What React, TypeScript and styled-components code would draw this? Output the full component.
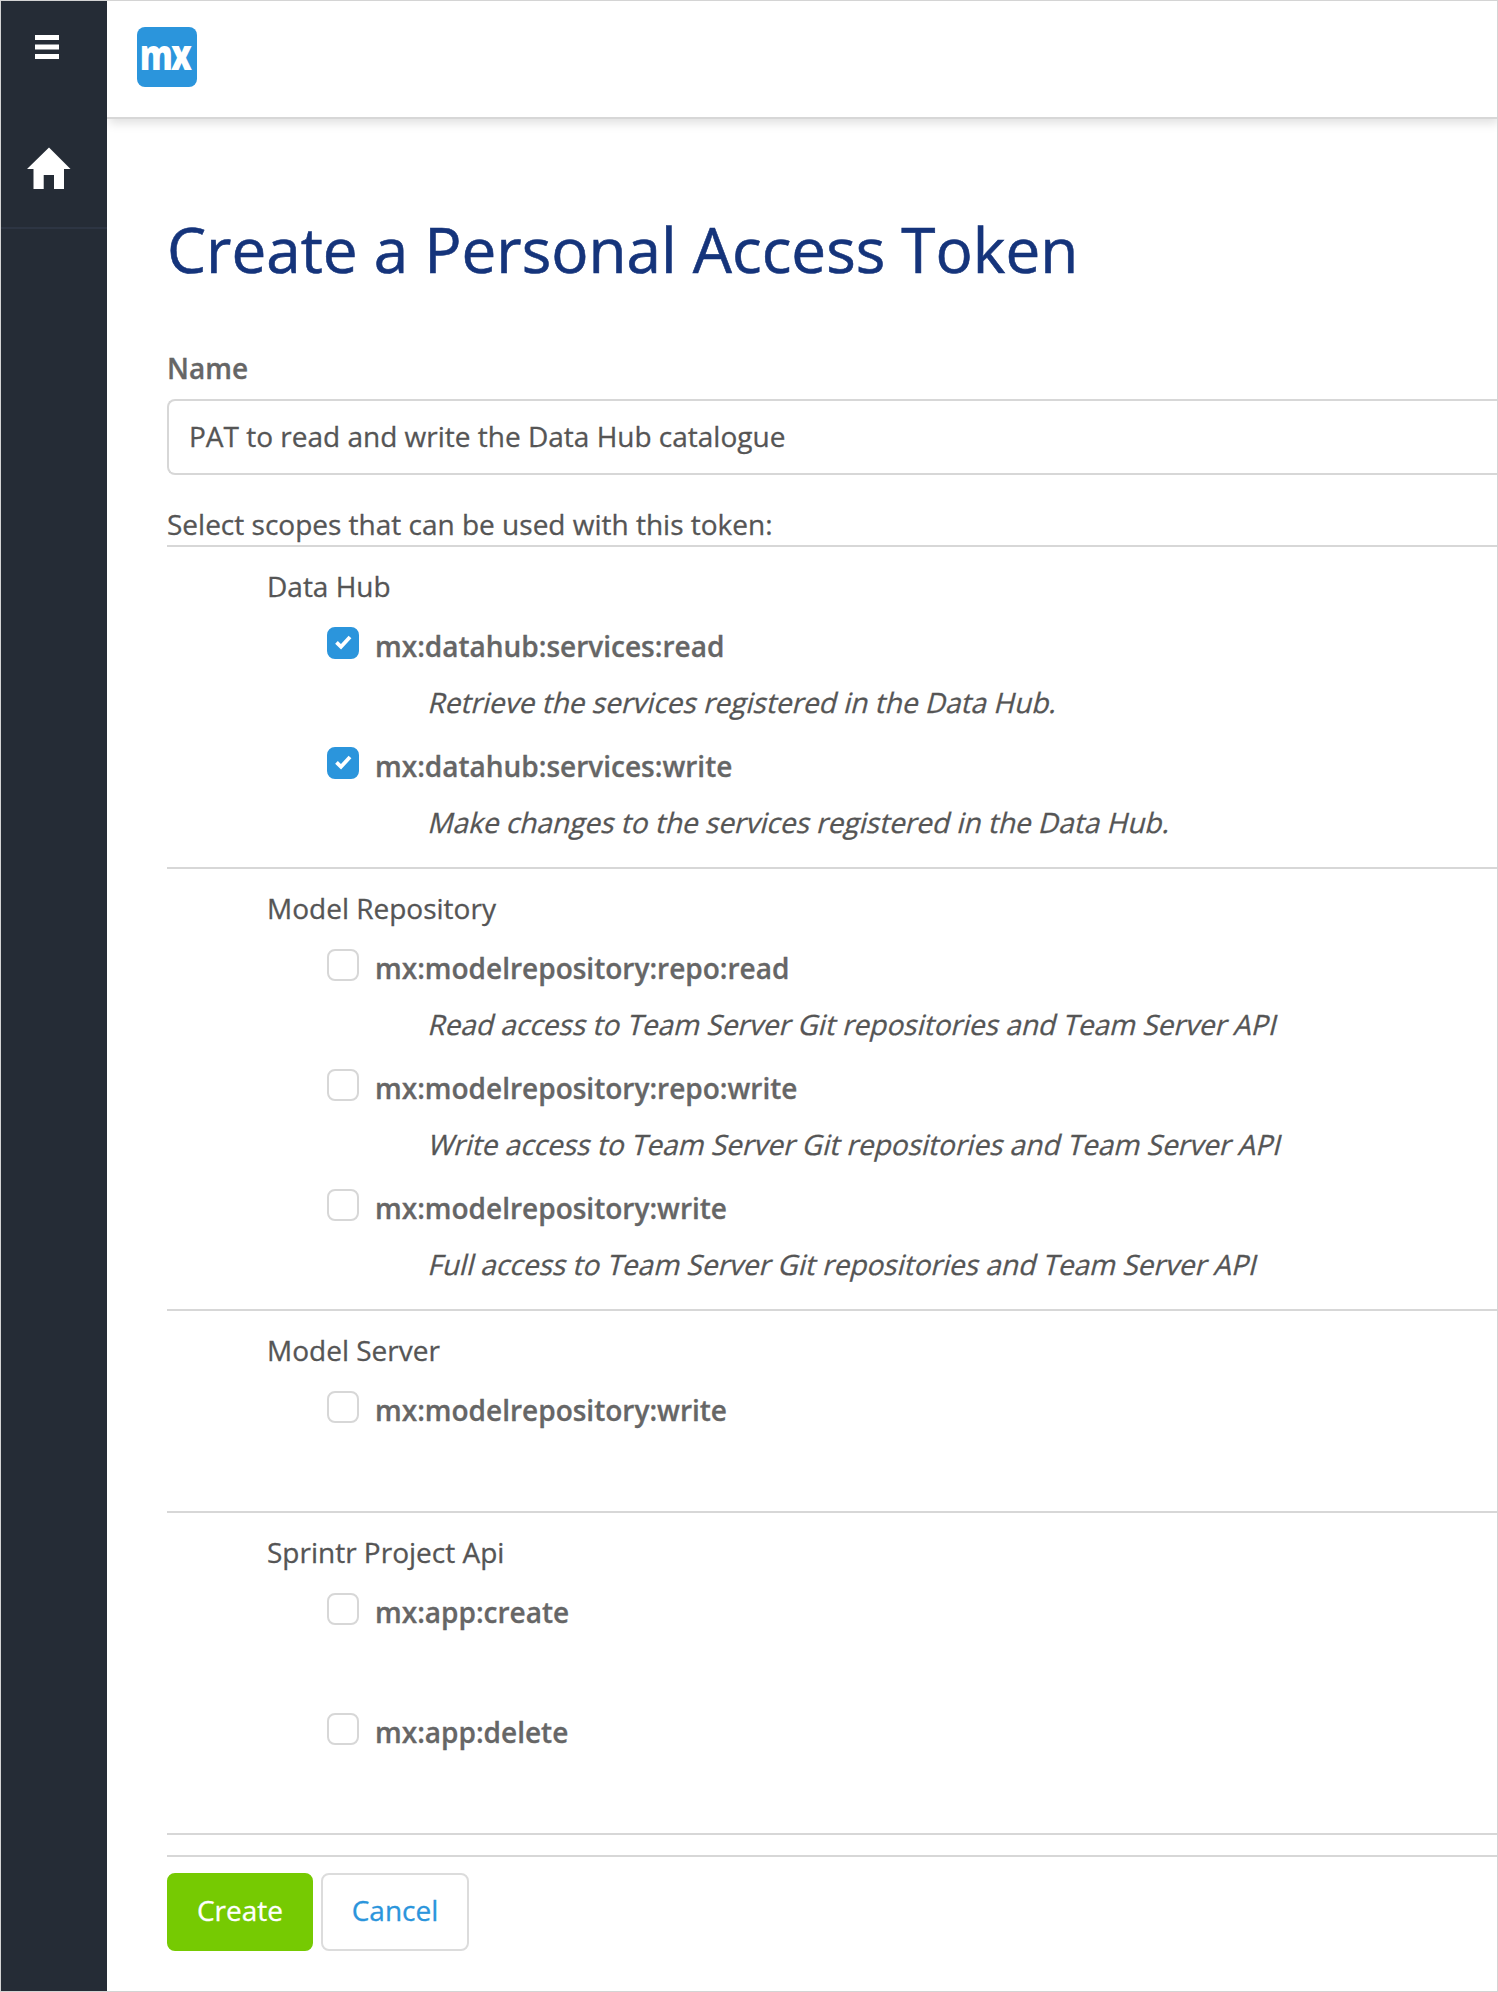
import React from "react";
import styled, { createGlobalStyle } from "styled-components";

const GlobalStyle = createGlobalStyle`
  *, *::before, *::after { box-sizing: border-box; }
  html, body { margin: 0; padding: 0; background: #fff; }
  body { overflow: hidden; }
`;

const Frame = styled.div`
  display: flex;
  width: 1498px;
  height: 1992px;
  overflow: hidden;
  border: 1px solid #d4d4d4;
  background: #fff;
  color: #555;
  font-family: "Open Sans", "Noto Sans", sans-serif;
  font-size: 28px;
  line-height: 40px;
  -webkit-text-stroke-width: 0.3px;
`;

const Sidebar = styled.nav`
  flex: none;
  width: 106px;
  background: #252c36;
`;

const MenuButton = styled.div`
  height: 108px;
  padding: 34px 0 0 34px;
  svg { display: block; }
`;

const HomeLink = styled.div`
  height: 120px;
  padding: 39px 0 0 26px;
  border-bottom: 2px solid #2d3543;
  svg { display: block; overflow: visible; }
`;

const Main = styled.div`
  flex: 1;
  min-width: 0;
  display: flex;
  flex-direction: column;
`;

const Header = styled.header`
  flex: none;
  height: 118px;
  padding: 26px 0 0 30px;
  border-bottom: 2px solid #d7d7d7;
  box-shadow: 2px 4px 10px rgba(0, 0, 0, 0.13);
  clip-path: inset(0 0 -30px 0);
  svg { display: block; overflow: visible; }
`;

const Content = styled.main`
  flex: 1;
  display: flex;
  flex-direction: column;
  padding: 87px 0 0 60px;
`;

const Title = styled.h1`
  margin: 0;
  font-size: 62px;
  font-weight: 400;
  line-height: 86px;
  color: #15347b;
  white-space: nowrap;
  -webkit-text-stroke-width: 0.6px;
`;

const FieldLabel = styled.label`
  margin-top: 56px;
  font-weight: 600;
  color: #666;
`;

const TextField = styled.div`
  margin-top: 11px;
  height: 76px;
  padding: 15px 20px;
  border: 2px solid #d7d7d7;
  border-right: 0;
  border-radius: 8px 0 0 8px;
`;

const Hint = styled.p`
  margin: 29px 0 0;
  height: 41px;
`;

const Group = styled.section`
  border-top: 2px solid #d7d7d7;
  padding: 19px 0 21px 100px;
`;

const Scope = styled.div`
  height: 120px;
  padding-left: 60px;
`;

const ScopeRow = styled.div`
  display: flex;
  gap: 16px;
  padding-top: 20px;
`;

const Checkbox = styled.span<{ $checked?: boolean }>`
  flex: none;
  display: flex;
  align-items: center;
  justify-content: center;
  width: 32px;
  height: 32px;
  margin-top: 1px;
  border-radius: 8px;
  border: 2px solid ${(p) => (p.$checked ? "#2b95dc" : "#d7d7d7")};
  background: ${(p) => (p.$checked ? "#2b95dc" : "#fff")};
  svg { overflow: visible; }
`;

const ScopeName = styled.span`
  font-weight: 600;
  color: #666;
`;

/* Slants the upright face, pivoting on the text baseline. */
const Description = styled.div`
  margin: 16px 0 0 100px;
  width: max-content;
  transform: skewX(-14deg);
  transform-origin: 0 31px;
  white-space: nowrap;
`;

const Footer = styled.footer`
  border-top: 2px solid #d7d7d7;
`;

const Actions = styled.div`
  display: flex;
  gap: 8px;
  margin-top: 20px;
  padding-top: 16px;
  border-top: 2px solid #d7d7d7;
`;

const Button = styled.button<{ $primary?: boolean }>`
  width: ${(p) => (p.$primary ? 146 : 148)}px;
  height: 78px;
  padding: 0 0 4px;
  border-radius: 8px;
  border: 2px solid ${(p) => (p.$primary ? "#76ca02" : "#dcdcdc")};
  background: ${(p) => (p.$primary ? "#76ca02" : "#fff")};
  color: ${(p) => (p.$primary ? "#fff" : "#2b95dc")};
  font: inherit;
`;

type ScopeItem = { name: string; description?: string; checked?: boolean };

const groups: { title: string; scopes: ScopeItem[] }[] = [
  {
    title: "Data Hub",
    scopes: [
      {
        name: "mx:datahub:services:read",
        description: "Retrieve the services registered in the Data Hub.",
        checked: true,
      },
      {
        name: "mx:datahub:services:write",
        description: "Make changes to the services registered in the Data Hub.",
        checked: true,
      },
    ],
  },
  {
    title: "Model Repository",
    scopes: [
      {
        name: "mx:modelrepository:repo:read",
        description: "Read access to Team Server Git repositories and Team Server API",
      },
      {
        name: "mx:modelrepository:repo:write",
        description: "Write access to Team Server Git repositories and Team Server API",
      },
      {
        name: "mx:modelrepository:write",
        description: "Full access to Team Server Git repositories and Team Server API",
      },
    ],
  },
  { title: "Model Server", scopes: [{ name: "mx:modelrepository:write" }] },
  {
    title: "Sprintr Project Api",
    scopes: [{ name: "mx:app:create" }, { name: "mx:app:delete" }],
  },
];

const MenuIcon = () => (
  <svg width="24" height="24" viewBox="0 0 24 24" fill="#fff">
    <rect y="0" width="24" height="5" />
    <rect y="9.5" width="24" height="5" />
    <rect y="19" width="24" height="5" />
  </svg>
);

const HomeIcon = () => (
  <svg width="44" height="42" viewBox="0 0 44 42" fill="#fff">
    <path d="M22-.5 43.5 21H37V41H27V27H16.7V41H6.5V21H0Z" />
  </svg>
);

const Logo = () => (
  <svg width="60" height="60" viewBox="0 0 60 60">
    <rect width="60" height="60" rx="8" fill="#2b95dc" />
    <text
      transform="translate(2.7 42.6) scale(0.78 1)"
      fill="#fff"
      fontFamily="Open Sans, sans-serif"
      fontWeight="800"
      fontSize="42.5"
      letterSpacing="-2.4"
    >
      mx
    </text>
  </svg>
);

const CheckIcon = () => (
  <svg width="16" height="14" viewBox="0 0 16 14">
    <path d="M1.5 6.3 6 10.8 15 1" fill="none" stroke="#fff" strokeWidth="3.8" />
  </svg>
);

export default function App() {
  return (
    <>
      <GlobalStyle />
      <Frame>
        <Sidebar>
          <MenuButton>
            <MenuIcon />
          </MenuButton>
          <HomeLink>
            <HomeIcon />
          </HomeLink>
        </Sidebar>
        <Main>
          <Header>
            <Logo />
          </Header>
          <Content>
            <Title>Create a Personal Access Token</Title>
            <FieldLabel>Name</FieldLabel>
            <TextField>PAT to read and write the Data Hub catalogue</TextField>
            <Hint>Select scopes that can be used with this token:</Hint>
            {groups.map((group) => (
              <Group key={group.title}>
                <div>{group.title}</div>
                {group.scopes.map((scope) => (
                  <Scope key={scope.name}>
                    <ScopeRow>
                      <Checkbox $checked={scope.checked}>
                        {scope.checked && <CheckIcon />}
                      </Checkbox>
                      <ScopeName>{scope.name}</ScopeName>
                    </ScopeRow>
                    <Description>{scope.description}</Description>
                  </Scope>
                ))}
              </Group>
            ))}
            <Footer>
              <Actions>
                <Button $primary>Create</Button>
                <Button>Cancel</Button>
              </Actions>
            </Footer>
          </Content>
        </Main>
      </Frame>
    </>
  );
}
